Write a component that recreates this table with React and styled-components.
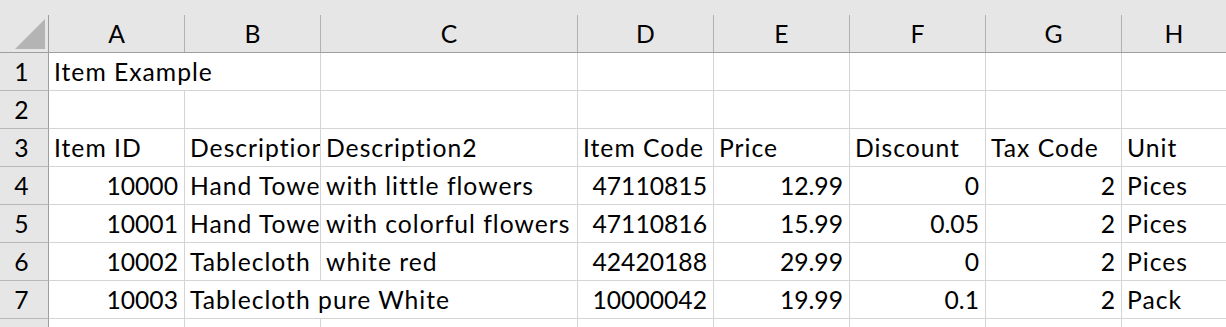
import React from "react";
import styled, { createGlobalStyle } from "styled-components";

const COLS = "49px 136px 136px 257px 136px 136px 136px 136px 1fr";

const GlobalStyle = createGlobalStyle`
  html, body {
    margin: 0;
    padding: 0;
    background: #ffffff;
  }
  body {
    font-family: Lato, "Liberation Sans", sans-serif;
    color: #000;
  }
`;

const Sheet = styled.div`
  width: 1226px;
  height: 327px;
  overflow: hidden;
  background: #fff;
  font-size: 24.7px;
`;

const HeaderRow = styled.div`
  display: grid;
  grid-template-columns: ${COLS};
  height: 53px;
  padding-top: 15px;
  box-sizing: border-box;
  background: #e6e6e6;
  border-bottom: 1px solid #9e9e9e;
`;

const Corner = styled.div`
  display: flex;
  justify-content: flex-end;
  align-items: flex-end;
  padding: 0 3px 3px 0;
  border-right: 1px solid #9e9e9e;
`;

const Triangle = styled.div`
  width: 30px;
  height: 30px;
  background: #b4b4b4;
  clip-path: polygon(100% 0, 100% 100%, 0 100%);
`;

const ColLabel = styled.div`
  display: flex;
  align-items: flex-end;
  justify-content: center;
  padding-bottom: 8px;
  line-height: 20px;
  border-right: 1px solid #b1b1b1;
  &:last-child {
    border-right: none;
  }
`;

const Row = styled.div`
  display: grid;
  grid-template-columns: ${COLS};
  height: 38px;
`;

const RowLabel = styled.div`
  display: flex;
  align-items: flex-end;
  justify-content: center;
  padding: 0 5px 8px 0;
  line-height: 20px;
  background: #e6e6e6;
  border-right: 1px solid #9e9e9e;
  border-bottom: 1px solid #b8b8b8;
`;

const Cell = styled.div`
  display: flex;
  align-items: flex-end;
  justify-content: ${(p) => (p.$num ? "flex-end" : "flex-start")};
  padding: 0 ${(p) => (p.$num ? "6px" : "0")} 8px ${(p) => (p.$num ? "0" : "5px")};
  line-height: 20px;
  letter-spacing: ${(p) => (p.$num ? "0" : "1px")};
  white-space: nowrap;
  overflow: hidden;
  border-right: 1px solid #d4d4d4;
  border-bottom: 1px solid #d4d4d4;
  grid-column: ${(p) => (p.$span ? `span ${p.$span}` : "auto")};
  &:last-child {
    border-right: none;
  }
`;

const letters = ["A", "B", "C", "D", "E", "F", "G", "H"];

// each cell: [text, numeric, span]
const empty = [[""], [""], [""], [""], [""], [""], [""], [""]];

const rows = [
  [["Item Example", false, 2], [""], [""], [""], [""], [""], [""]],
  empty,
  [
    ["Item ID"],
    ["Description"],
    ["Description2"],
    ["Item Code"],
    ["Price"],
    ["Discount"],
    ["Tax Code"],
    ["Unit"],
  ],
  [
    ["10000", true],
    ["Hand Towel"],
    ["with little flowers"],
    ["47110815", true],
    ["12.99", true],
    ["0", true],
    ["2", true],
    ["Pices"],
  ],
  [
    ["10001", true],
    ["Hand Towel"],
    ["with colorful flowers"],
    ["47110816", true],
    ["15.99", true],
    ["0.05", true],
    ["2", true],
    ["Pices"],
  ],
  [
    ["10002", true],
    ["Tablecloth"],
    ["white red"],
    ["42420188", true],
    ["29.99", true],
    ["0", true],
    ["2", true],
    ["Pices"],
  ],
  [
    ["10003", true],
    ["Tablecloth pure White", false, 2],
    ["10000042", true],
    ["19.99", true],
    ["0.1", true],
    ["2", true],
    ["Pack"],
  ],
  empty,
];

export default function App() {
  return (
    <>
      <GlobalStyle />
      <Sheet>
        <HeaderRow>
          <Corner>
            <Triangle />
          </Corner>
          {letters.map((l) => (
            <ColLabel key={l}>{l}</ColLabel>
          ))}
        </HeaderRow>
        {rows.map((cells, i) => (
          <Row key={i}>
            <RowLabel>{i + 1}</RowLabel>
            {cells.map(([text, num, span], j) => (
              <Cell key={j} $num={num} $span={span}>
                {text}
              </Cell>
            ))}
          </Row>
        ))}
      </Sheet>
    </>
  );
}
